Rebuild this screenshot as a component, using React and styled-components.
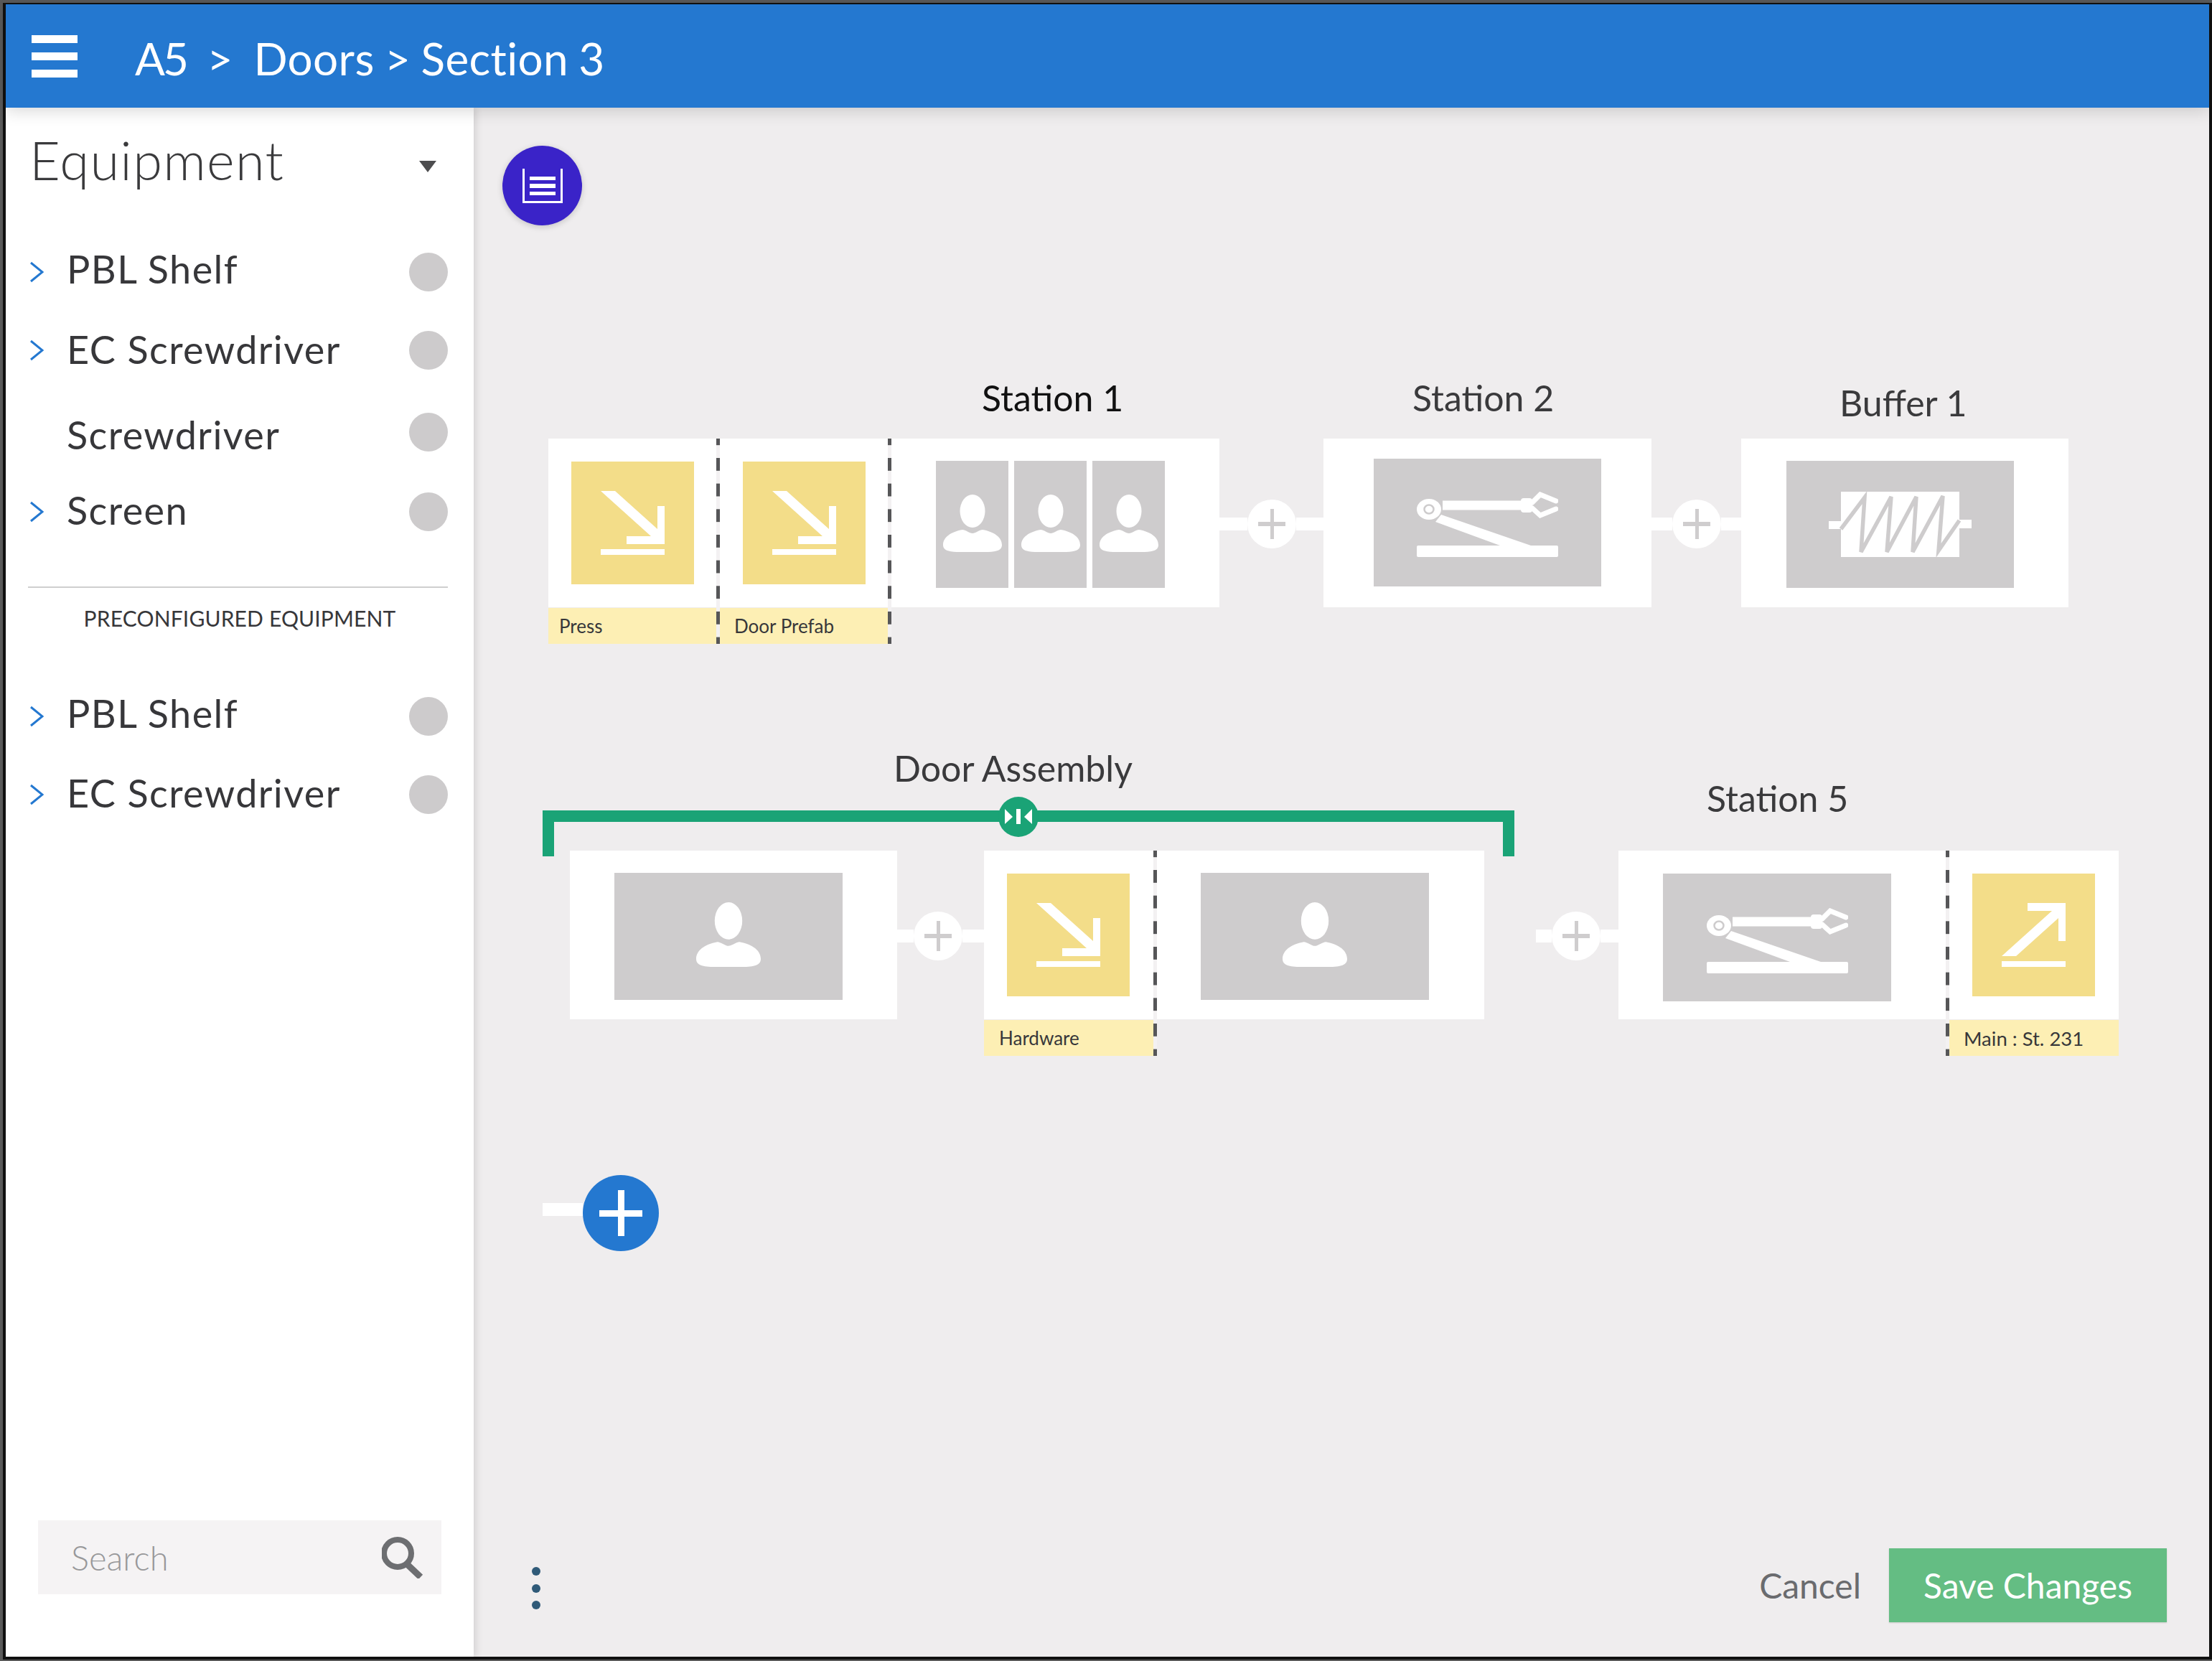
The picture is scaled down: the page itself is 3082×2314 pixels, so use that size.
import React from "react";
import styled, { createGlobalStyle } from "styled-components";

const BLUE = "#2478d0";
const FONT = `Lato, "Open Sans", "Liberation Sans", sans-serif`;

const Global = createGlobalStyle`
  html, body { margin: 0; padding: 0; background: #5a5a5a; }
  * { box-sizing: border-box; }
  body { font-family: ${FONT}; }
`;

const Outer = styled.div`
  width: 3082px; height: 2314px; padding: 4px 0 2px 4px; background: #5a5a5a; overflow: hidden;
`;
const Frame = styled.div`
  width: 3078px; height: 2308px; display: flex; flex-direction: column;
  border: solid #111; border-width: 2px 4px 4px 4px; background: #efedee;
`;
const Header = styled.header`
  height: 144px; flex: none; display: flex; align-items: center; gap: 80px; padding-left: 36px;
  background: ${BLUE}; box-shadow: 0 4px 22px rgba(0,0,0,.16); position: relative; z-index: 3;
`;
const Menu = styled.div`
  width: 64px; display: flex; flex-direction: column; gap: 13px;
  span { display: block; height: 11px; background: #fff; }
`;
const Crumb = styled.div`
  color: #fff; font-size: 62px; font-weight: 400; white-space: pre; padding-top: 5px; word-spacing: -2px; letter-spacing: 0.4px;
`;
const CrumbRoot = styled.span`letter-spacing: -3px;`;
const Body = styled.div`flex: 1; display: flex; min-height: 0;`;

const Sidebar = styled.aside`
  width: 652px; flex: none; display: flex; flex-direction: column; background: #fff;
  box-shadow: 3px 0 10px rgba(0,0,0,.12); position: relative; z-index: 2; padding-bottom: 87px;
`;
const SideHead = styled.div`
  height: 202px; flex: none; display: flex; align-items: flex-start; justify-content: space-between;
  padding: 28px 52px 0 33px;
`;
const SideTitle = styled.h1`
  margin: 0; font-size: 74px; font-weight: 300; color: #3a3a3c; line-height: 90px; letter-spacing: 1.3px;
`;
const Caret = styled.div`
  width: 24px; height: 16px; margin-top: 46px; background: #4d4d4f;
  clip-path: polygon(0 0, 100% 0, 50% 100%);
`;
const Row = styled.div`
  height: 54px; flex: none; display: flex; align-items: center; padding: 0 36px 0 33px;
  margin-top: ${p => p.$mt || 0}px;
`;
const ChevronSlot = styled.div`width: 52px; flex: none; display: flex; align-items: center;`;
const RowLabel = styled.div`
  flex: 1; font-size: 54px; font-weight: 400; color: #37373a; white-space: nowrap; letter-spacing: 1.4px;
  transform: translateY(${p => p.$dy || 0}px);
`;
const Status = styled.div`width: 54px; height: 54px; border-radius: 50%; background: #cdcbcc; flex: none;`;
const Rule = styled.div`height: 2px; margin: 77px 36px 0 31px; background: #cfcfcf; flex: none;`;
const Caption = styled.div`
  height: 84px; flex: none; display: flex; align-items: center; justify-content: center; margin-bottom: 68px;
  font-size: 30px; color: #37373a; white-space: nowrap; letter-spacing: 0.15px;
`;
const Search = styled.div`
  margin: auto 45px 0 45px; height: 103px; flex: none; background: #f5f3f4; display: flex; align-items: center;
  justify-content: space-between; padding: 0 25px 0 46px;
`;
const SearchText = styled.span`font-size: 47px; font-weight: 300; color: #98989a;`;

const Main = styled.main`flex: 1; display: flex; flex-direction: column; min-width: 0;`;
const Round = styled.div`
  width: 111px; height: 111px; border-radius: 50%; background: #3a23c8; margin: 53px 0 0 40px; flex: none;
  display: flex; align-items: center; justify-content: center; box-shadow: 0 2px 8px rgba(0,0,0,.18);
`;
const Lane = styled.div`
  display: flex; align-items: flex-start; flex: none;
  margin: ${p => p.$mt}px 0 0 ${p => p.$ml}px;
`;
const Group = styled.div`
  display: flex; flex-direction: column; flex: none;
  padding-top: ${p => p.$pt || 0}px;
`;
const Title = styled.div`
  height: 60px; line-height: 60px; font-size: 50px; white-space: nowrap; color: ${p => p.$dark ? "#111" : "#3a3a3c"};
  margin-bottom: ${p => p.$mb}px; padding-left: ${p => p.$pl}px;
`;
const Cards = styled.div`
  display: flex; align-items: flex-start;
  width: ${p => p.$w ? `${p.$w}px` : "auto"}; padding-left: ${p => p.$pl || 0}px;
`;
const Bay = styled.div`display: flex; flex-direction: column; width: ${p => p.$w}px; flex: none;`;
const Card = styled.div`
  height: 235px; background: #fff; display: flex; align-items: flex-start; gap: ${p => p.$gap || 0}px;
  padding: ${p => p.$pt}px 0 0 ${p => p.$pl}px;
`;
const Tile = styled.div`
  width: ${p => p.$w}px; height: ${p => p.$h}px; background: ${p => p.$y ? "#f3dd89" : "#cecccd"}; flex: none;
  display: flex; align-items: center; justify-content: center;
  padding: ${p => p.$shift > 0 ? p.$shift : 0}px 0 ${p => p.$shift < 0 ? -p.$shift : 0}px;
`;
const Tag = styled.div`
  height: 50px; margin-top: 1px; background: #fdefb4; display: flex; align-items: center; padding-left: ${p => p.$pl}px;
  font-size: ${p => p.$fs || 26}px; color: #37373a; white-space: nowrap;
`;
const Dash = styled.div`
  width: 5px; height: 286px; flex: none;
  background: linear-gradient(to bottom, #565658 51%, #f3f1f2 51%) 0 -8.67px / 100% 35.67px repeat-y;
`;
const Connector = styled.div`
  width: ${p => p.$w}px; height: 235px; flex: none; display: flex; align-items: center; padding-top: 3px;
  margin-left: ${p => p.$ml || 0}px;
`;
const Wire = styled.div`
  flex: ${p => p.$long ? "none" : 1}; width: ${p => p.$long ? `${p.$long}px` : "auto"}; height: 18px; background: #fff;
`;
const Plus = styled.div`
  width: 68px; height: 68px; border-radius: 50%; background: #fff; flex: none;
  display: flex; align-items: center; justify-content: center;
`;
const Bracket = styled.div`
  height: 64px; margin-bottom: -8px; border: solid #1aa376; border-width: 16px 16px 0 16px; position: relative;
`;
const Knob = styled.div`
  position: absolute; left: 619px; top: -35px; width: 56px; height: 56px; border-radius: 50%; background: #1aa376;
  display: flex; align-items: center; justify-content: center;
`;
const AddRow = styled.div`display: flex; align-items: flex-start; flex: none; margin: 166px 0 0 96px;`;
const AddWire = styled.div`width: 56px; height: 18px; margin-top: 39px; background: #fff;`;
const AddBtn = styled.div`
  width: 106px; height: 106px; border-radius: 50%; background: ${BLUE};
  display: flex; align-items: center; justify-content: center;
`;
const Footer = styled.div`
  margin-top: auto; display: flex; align-items: center; padding: 0 59px 48px 81px; flex: none;
`;
const Kebab = styled.div`
  display: flex; flex-direction: column; gap: 11.5px; margin-top: 8px;
  span { width: 12px; height: 12px; border-radius: 50%; background: #2f5a78; display: block; }
`;
const Cancel = styled.div`margin: 0 39px 0 auto; font-size: 48px; color: #6a6b6e;`;
const Save = styled.div`
  width: 387px; height: 103px; background: #64bd83; color: #fff; font-size: 48px;
  display: flex; align-items: center; justify-content: center; box-shadow: 0 1px 2px rgba(0,0,0,.15);
`;

const Chevron = () => (
  <svg width="20" height="30" viewBox="0 0 20 30"><polyline points="2,2 18,15 2,28" fill="none" stroke={BLUE} strokeWidth="3" /></svg>
);
const ListIcon = () => (
  <svg width="56" height="48" viewBox="0 0 56 48">
    <path d="M1.5 0V46.5H54.5V0" fill="none" stroke="#fff" strokeWidth="3" />
    <rect x="10" y="11" width="36" height="5" fill="#fff" />
    <rect x="10" y="21" width="36" height="6" fill="#fff" />
    <rect x="10" y="32" width="36" height="5" fill="#fff" />
  </svg>
);
const SearchIcon = () => (
  <svg width="58" height="58" viewBox="0 0 58 58">
    <circle cx="22" cy="23" r="19" fill="none" stroke="#6d6e71" strokeWidth="8" />
    <path d="M35 38L54 56" stroke="#6d6e71" strokeWidth="9" fill="none" />
  </svg>
);
const Person = ({ w, h }) => (
  <svg width={w} height={h} viewBox="0 0 82 80" preserveAspectRatio="none">
    <ellipse cx="41" cy="23" rx="17.5" ry="23" fill="#fff" />
    <path d="M41 54C37 54 31 49 27 49C10 52 0 60 0 70C0 78 8 80 24 80H58C74 80 82 78 82 70C82 60 72 52 55 49C51 49 45 54 41 54Z" fill="#fff" />
  </svg>
);
const ArrowDown = () => (
  <svg width="89" height="89" viewBox="0 0 89 89">
    <polygon points="0,0 20,0 79,53 79,21 89,21 89,74 36,74 36,63 70,63" fill="#fff" />
    <rect x="0" y="81" width="89" height="8" fill="#fff" />
  </svg>
);
const ArrowUp = () => (
  <svg width="89" height="89" viewBox="0 0 89 89">
    <polygon points="0,74 20,74 79,21 79,53 89,53 89,0 36,0 36,11 70,11" fill="#fff" />
    <rect x="0" y="81" width="89" height="8" fill="#fff" />
  </svg>
);
const Robot = () => (
  <svg width="197" height="91" viewBox="0 0 197 91">
    <rect x="0" y="75" width="197" height="16" rx="2" fill="#fff" />
    <ellipse cx="17" cy="24.5" rx="17" ry="14.5" fill="#fff" />
    <ellipse cx="17" cy="24.5" rx="6.5" ry="6" fill="#fff" stroke="#cecccd" strokeWidth="2.5" />
    <rect x="36" y="12.5" width="110" height="13" fill="#fff" />
    <rect x="145" y="9" width="16" height="20" rx="4" fill="#fff" />
    <polyline points="161,15 172,4 194,13" fill="none" stroke="#fff" strokeWidth="7" strokeLinecap="round" />
    <polyline points="161,23 172,33 194,24" fill="none" stroke="#fff" strokeWidth="7" strokeLinecap="round" />
    <polygon points="34,32 159,75 116,75 26,42" fill="#fff" />
  </svg>
);
const Spring = () => (
  <svg width="199" height="91" viewBox="0 0 199 91">
    <rect x="17" y="0" width="165" height="91" fill="#fff" />
    <rect x="0" y="41" width="17" height="11" fill="#fff" />
    <rect x="182" y="39" width="17" height="12" fill="#fff" />
    <polyline points="17,52 50,8 45,84 87,7 81,84 122,7 117,84 159,6 153,82 182,40" fill="none" stroke="#cecccd" strokeWidth="5.5" />
  </svg>
);
const PlusGlyph = () => (
  <svg width="40" height="42" viewBox="0 0 40 42">
    <rect x="1" y="18" width="38" height="6" fill="#cfcdce" />
    <rect x="18" y="0" width="5" height="42" fill="#cfcdce" />
  </svg>
);
const Link = ({ w, ml, tail }) => (
  <Connector $w={w} $ml={ml}>
    <Wire />
    <Plus><PlusGlyph /></Plus>
    <Wire $long={tail} />
  </Connector>
);
const CollapseGlyph = () => (
  <svg width="38" height="22" viewBox="0 0 38 22">
    <polygon points="0,0 11,11 0,21" fill="#fff" />
    <rect x="16" y="0" width="6" height="21" fill="#fff" />
    <polygon points="38,0 27,11 38,21" fill="#fff" />
  </svg>
);

const SideRow = ({ label, chevron = true, mt, dy }) => (
  <Row $mt={mt}>
    <ChevronSlot>{chevron && <Chevron />}</ChevronSlot>
    <RowLabel $dy={dy}>{label}</RowLabel>
    <Status />
  </Row>
);

export default function App() {
  return (
    <Outer>
      <Global />
      <Frame>
        <Header>
          <Menu><span /><span /><span /></Menu>
          <Crumb><CrumbRoot>A5</CrumbRoot>{"  >  Doors > Section 3"}</Crumb>
        </Header>
        <Body>
          <Sidebar>
            <SideHead>
              <SideTitle>Equipment</SideTitle>
              <Caret />
            </SideHead>
            <SideRow label="PBL Shelf" dy={-5} />
            <SideRow label="EC Screwdriver" mt={55} dy={-2} />
            <SideRow label="Screwdriver" chevron={false} mt={60} dy={3} />
            <SideRow label="Screen" mt={57} dy={-3} />
            <Rule />
            <Caption>PRECONFIGURED EQUIPMENT</Caption>
            <SideRow label="PBL Shelf" dy={-5} />
            <SideRow label="EC Screwdriver" mt={55} dy={-3} />
            <Search>
              <SearchText>Search</SearchText>
              <SearchIcon />
            </Search>
          </Sidebar>
          <Main>
            <Round><ListIcon /></Round>
            <Lane $mt={210} $ml={104}>
              <Group>
                <Title $dark $mb={27} $pl={604}>Station 1</Title>
                <Cards>
                  <Bay $w={234}>
                    <Card $pl={32} $pt={32}><Tile $y $w={171} $h={171}><ArrowDown /></Tile></Card>
                    <Tag $pl={15}>Press</Tag>
                  </Bay>
                  <Dash />
                  <Bay $w={234}>
                    <Card $pl={32} $pt={32}><Tile $y $w={171} $h={171}><ArrowDown /></Tile></Card>
                    <Tag $pl={20}>Door Prefab</Tag>
                  </Bay>
                  <Dash />
                  <Bay $w={457}>
                    <Card $pl={62} $pt={31} $gap={8}>
                      <Tile $w={101} $h={177} $shift={-4}><Person w={82} h={80} /></Tile>
                      <Tile $w={101} $h={177} $shift={-4}><Person w={82} h={80} /></Tile>
                      <Tile $w={101} $h={177} $shift={-4}><Person w={82} h={80} /></Tile>
                    </Card>
                  </Bay>
                </Cards>
              </Group>
              <Group $pt={87}><Link w={145} /></Group>
              <Group>
                <Title $mb={27} $pl={124}>Station 2</Title>
                <Bay $w={457}>
                  <Card $pl={70} $pt={28}><Tile $w={317} $h={178} $shift={4}><Robot /></Tile></Card>
                </Bay>
              </Group>
              <Group $pt={87}><Link w={125} /></Group>
              <Group $pt={7}>
                <Title $mb={20} $pl={137}>Buffer 1</Title>
                <Bay $w={456}>
                  <Card $pl={63} $pt={31}><Tile $w={317} $h={177}><Spring /></Tile></Card>
                </Bay>
              </Group>
            </Lane>
            <Lane $mt={143} $ml={96}>
              <Group>
                <Title $mb={29} $pl={489}>Door Assembly</Title>
                <Bracket><Knob><CollapseGlyph /></Knob></Bracket>
                <Cards $w={1354} $pl={38}>
                  <Bay $w={456}>
                    <Card $pl={62} $pt={31}><Tile $w={318} $h={177} $shift={-5}><Person w={90} h={90} /></Tile></Card>
                  </Bay>
                  <Link w={121} tail={30} />
                  <Bay $w={236}>
                    <Card $pl={32} $pt={32}><Tile $y $w={171} $h={171}><ArrowDown /></Tile></Card>
                    <Tag $pl={21}>Hardware</Tag>
                  </Bay>
                  <Dash />
                  <Bay $w={456}>
                    <Card $pl={61} $pt={31}><Tile $w={318} $h={177} $shift={-5}><Person w={90} h={90} /></Tile></Card>
                  </Bay>
                </Cards>
              </Group>
              <Group $pt={145}><Link w={115} ml={30} tail={25} /></Group>
              <Group $pt={42}>
                <Title $mb={43} $pl={123}>Station 5</Title>
                <Cards>
                  <Bay $w={456}>
                    <Card $pl={62} $pt={32}><Tile $w={318} $h={178} $shift={8}><Robot /></Tile></Card>
                  </Bay>
                  <Dash />
                  <Bay $w={236}>
                    <Card $pl={32} $pt={32}><Tile $y $w={171} $h={171}><ArrowUp /></Tile></Card>
                    <Tag $pl={20} $fs={27.5}>Main : St. 231</Tag>
                  </Bay>
                </Cards>
              </Group>
            </Lane>
            <AddRow>
              <AddWire />
              <AddBtn>
                <svg width="60" height="64" viewBox="0 0 60 64">
                  <rect x="0" y="28" width="60" height="9" fill="#fff" />
                  <rect x="26" y="0" width="9" height="64" fill="#fff" />
                </svg>
              </AddBtn>
            </AddRow>
            <Footer>
              <Kebab><span /><span /><span /></Kebab>
              <Cancel>Cancel</Cancel>
              <Save>Save Changes</Save>
            </Footer>
          </Main>
        </Body>
      </Frame>
    </Outer>
  );
}
